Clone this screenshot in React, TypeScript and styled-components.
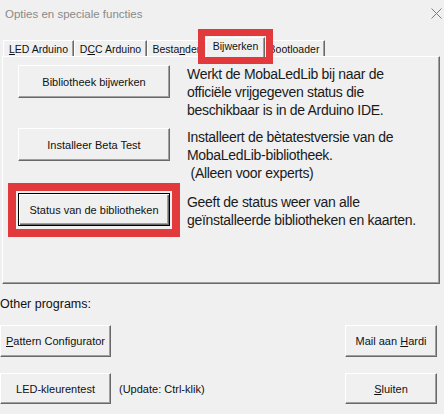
import styled, { createGlobalStyle } from "styled-components";

const Global = createGlobalStyle`
  html, body {
    margin: 0;
    padding: 0;
    background: #f0f0f0;
  }
  body {
    font-family: "Liberation Sans", Arial, sans-serif;
    color: #000;
  }
  #root {
    width: 444px;
    height: 414px;
    overflow: hidden;
  }
`;

const tabs = [
  { label: "LED Arduino", key: 0, w: 71 },
  { label: "DCC Arduino", key: 1, w: 73 },
  { label: "Bestanden", key: 5, w: 61 },
  { label: "Bijwerken", key: -1, w: 55 },
  { label: "Bootloader", key: -1, w: 62 },
];

// underlines the keyboard accelerator letter, like the Windows dialog does
function Accel({ text, at }: { text: string; at: number }) {
  if (at < 0) return <span>{text}</span>;
  return (
    <span>
      {text.slice(0, at)}
      <u>{text[at]}</u>
      {text.slice(at + 1)}
    </span>
  );
}

export default function App() {
  return (
    <Window>
      <Global />
      <TitleBar>
        <Title>Opties en speciale functies</Title>
        <CloseIcon width="11" height="11" viewBox="0 0 11 11">
          <path d="M0.5 0.5 L10.5 10.5 M10.5 0.5 L0.5 10.5" stroke="#7c7c7c" strokeWidth="1" />
        </CloseIcon>
      </TitleBar>

      <TabControl>
        <TabStrip>
          {tabs.map((t) => (
            <Tab key={t.label} $w={t.w} $active={t.label === "Bijwerken"}>
              <Accel text={t.label} at={t.key} />
              {t.label === "Bijwerken" && <Highlight $inset="-9px -9px -7px -9px" $thick={7} />}
            </Tab>
          ))}
        </TabStrip>

        <Panel>
          <Row $h={63}>
            <Button $w={152} $h={33}>Bibliotheek bijwerken</Button>
            <Info>
              Werkt de MobaLedLib bij naar de
              <br />
              officiële vrijgegeven status die
              <br />
              beschikbaar is in de Arduino IDE.
            </Info>
          </Row>
          <Row $h={65}>
            <Button $w={152} $h={33}>Installeer Beta Test</Button>
            <Info>
              Installeert de bètatestversie van de
              <br />
              MobaLedLib-bibliotheek.
              <br />
              {"\u00a0(Alleen voor experts)"}
            </Info>
          </Row>
          <Row $h={54}>
            <Marked>
              <Button $w={152} $h={33} $focused>
                Status van de bibliotheken
              </Button>
              <Highlight $inset="-10px -10px -11px -10px" $thick={8} />
            </Marked>
            <Info>
              Geeft de status weer van alle
              <br />
              geïnstalleerde bibliotheken en kaarten.
            </Info>
          </Row>
        </Panel>
      </TabControl>

      <SectionLabel>Other programs:</SectionLabel>

      <BottomRow $top={14} $h={32}>
        <Button $w={111} $h={32}>
          <Accel text="Pattern Configurator" at={0} />
        </Button>
        <Button $w={92} $h={32}>
          <Accel text="Mail aan Hardi" at={9} />
        </Button>
      </BottomRow>

      <BottomRow $top={16} $h={31}>
        <LeftGroup>
          <Button $w={111} $h={31}>LED-kleurentest</Button>
          <Note>(Update: Ctrl-klik)</Note>
        </LeftGroup>
        <Button $w={92} $h={31}>
          <Accel text="Sluiten" at={0} />
        </Button>
      </BottomRow>
    </Window>
  );
}

const Window = styled.div`
  width: 444px;
  height: 414px;
  display: flex;
  flex-direction: column;
`;

const TitleBar = styled.div`
  height: 28px;
  display: flex;
  align-items: center;
  padding: 0 2px 0 5px;
`;

const Title = styled.div`
  font-size: 11.5px;
  color: #8a8a8a;
`;

const CloseIcon = styled.svg`
  margin-left: auto;
  margin-top: -2px;
`;

const TabControl = styled.div`
  margin-left: 2px;
  width: 438px;
  display: flex;
  flex-direction: column;
`;

const TabStrip = styled.div`
  height: 28px;
  display: flex;
  align-items: flex-end;
  padding-left: 1px;
`;

const Tab = styled.div<{ $w: number; $active?: boolean }>`
  position: relative;
  box-sizing: border-box;
  width: ${(p) => p.$w + (p.$active ? 4 : 0)}px;
  height: ${(p) => (p.$active ? 20 : 16)}px;
  margin: ${(p) => (p.$active ? "0 -2px -1px" : "0")};
  z-index: ${(p) => (p.$active ? 2 : 1)};
  display: flex;
  align-items: ${(p) => (p.$active ? "flex-start" : "center")};
  justify-content: center;
  padding-top: ${(p) => (p.$active ? "2px" : "0")};
  font-size: 10.5px;
  color: #111;
  background: #f0f0f0;
  border-top: 1px solid #fff;
  border-left: 1px solid #fff;
  border-right: 1px solid #696969;
  box-shadow: inset -1px 0 #a0a0a0;
  white-space: nowrap;
`;

const Panel = styled.div`
  box-sizing: border-box;
  height: 228px;
  padding: 8px 0 0 15px;
  border-top: 1px solid #fff;
  border-left: 1px solid #fff;
  border-right: 1px solid #696969;
  border-bottom: 1px solid #696969;
  box-shadow: inset -1px -1px #a0a0a0;
  display: flex;
  flex-direction: column;
`;

const Row = styled.div<{ $h: number }>`
  height: ${(p) => p.$h}px;
  display: grid;
  grid-template-columns: 152px 1fr;
  column-gap: 17px;
  align-items: start;
`;

const Info = styled.div`
  font-size: 14px;
  line-height: 18px;
  letter-spacing: -0.3px;
  color: #1a1a1a;
  white-space: nowrap;
`;

const Marked = styled.div`
  position: relative;
  display: flex;
`;

const Highlight = styled.div<{ $inset: string; $thick: number }>`
  position: absolute;
  inset: ${(p) => p.$inset};
  border: ${(p) => p.$thick}px solid #e23a3c;
  pointer-events: none;
`;

const Button = styled.button<{ $w: number; $h: number; $focused?: boolean }>`
  box-sizing: border-box;
  width: ${(p) => p.$w}px;
  height: ${(p) => p.$h}px;
  padding: 0;
  margin: 0;
  font-family: "Liberation Sans", Arial, sans-serif;
  font-size: 11px;
  color: #111;
  background: #f0f0f0;
  border: 1px solid;
  border-color: ${(p) => (p.$focused ? "#000" : "#fff #696969 #696969 #fff")};
  box-shadow: ${(p) =>
    p.$focused
      ? "inset 1px 1px #fff, inset -1px -1px #696969, inset -2px -2px #a0a0a0"
      : "inset -1px -1px #a0a0a0"};
  display: flex;
  align-items: center;
  justify-content: center;
  white-space: nowrap;
`;

const SectionLabel = styled.div`
  margin-top: 13px;
  font-size: 12.5px;
  line-height: 14px;
  color: #111;
`;

const BottomRow = styled.div<{ $top: number; $h: number }>`
  margin-top: ${(p) => p.$top}px;
  height: ${(p) => p.$h}px;
  width: 437px;
  display: flex;
  justify-content: space-between;
  align-items: center;
`;

const LeftGroup = styled.div`
  display: flex;
  align-items: center;
  gap: 8px;
`;

const Note = styled.span`
  font-size: 11px;
  color: #111;
`;
